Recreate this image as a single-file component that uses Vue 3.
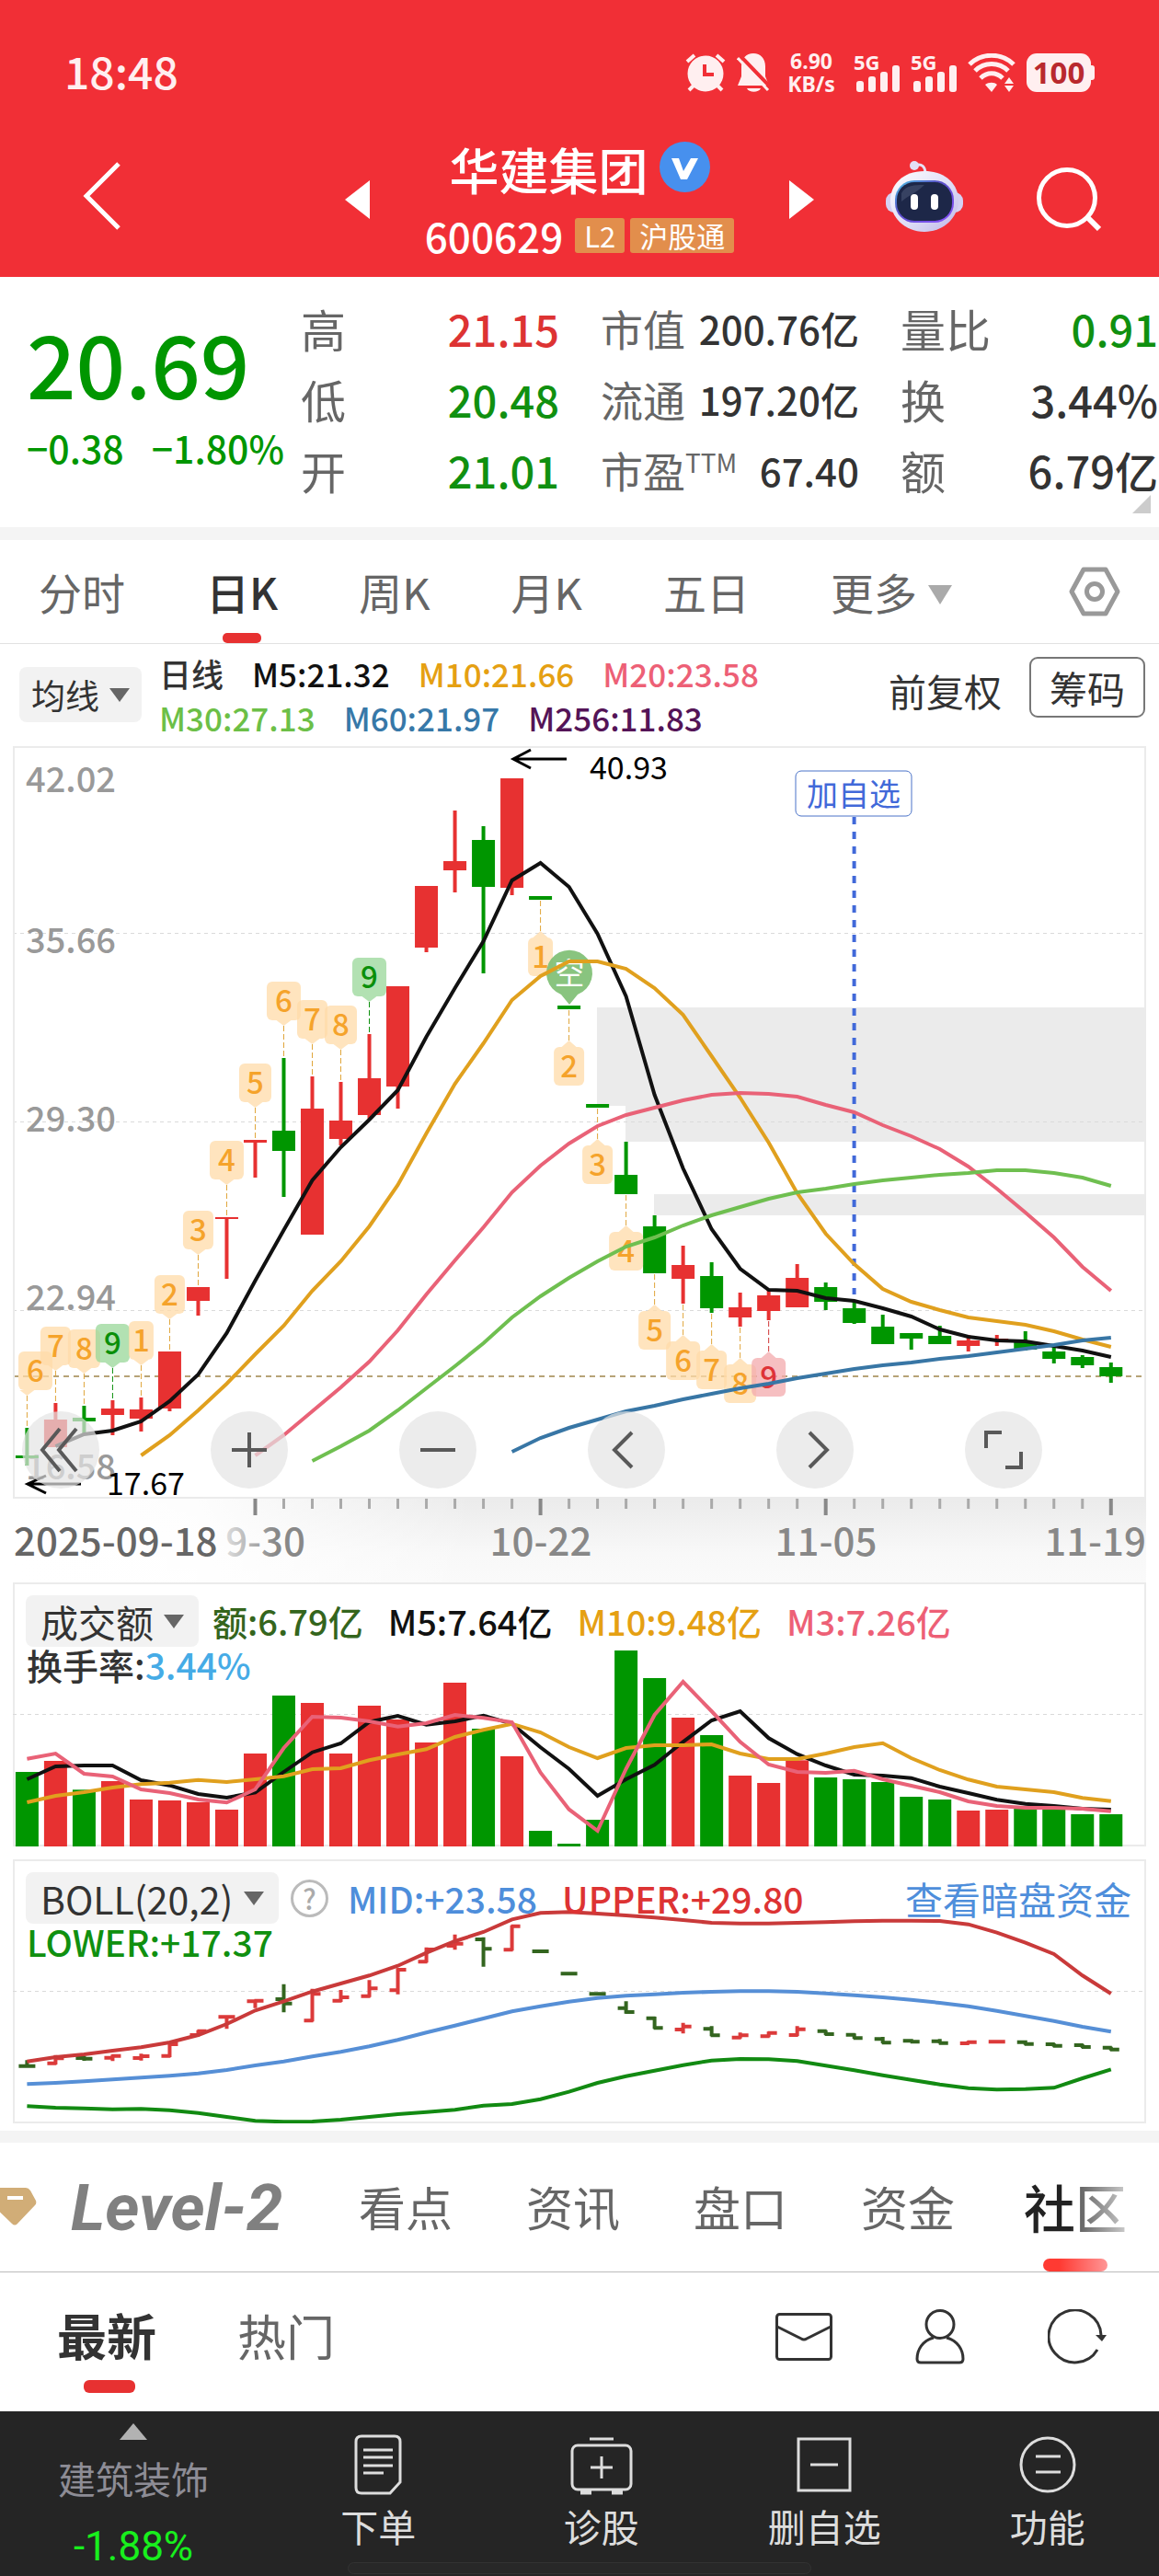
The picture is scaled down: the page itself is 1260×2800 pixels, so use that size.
<script setup>
import { ref } from 'vue'

const RED = '#e73131'
const GREEN = '#009600'
const STEP = 31.01
const FIRST_X = 29.4
const TAG_WIDTH = { 1: 27, 2: 33, 3: 33, 4: 37, 5: 35, 6: 37, 7: 33, 8: 35, 9: 37 }

const period = ref('日K')
const section = ref('社区')
const feed = ref('最新')

const xAt = i => FIRST_X + STEP * i

// legend values
const averages = [
  [
    { text: '日线', tone: 'ink' },
    { text: 'M5:21.32', tone: 'black' },
    { text: 'M10:21.66', tone: 'amber' },
    { text: 'M20:23.58', tone: 'pink' }
  ],
  [
    { text: 'M30:27.13', tone: 'lime' },
    { text: 'M60:21.97', tone: 'steel' },
    { text: 'M256:11.83', tone: 'plum' }
  ]
]

const quotes = [
  [
    { label: '高', value: '21.15', tone: 'up' },
    { label: '低', value: '20.48', tone: 'down' },
    { label: '开', value: '21.01', tone: 'down' }
  ],
  [
    { label: '市值', value: '200.76亿' },
    { label: '流通', value: '197.20亿' },
    { label: '市盈', sup: 'TTM', value: '67.40' }
  ],
  [
    { label: '量比', value: '0.91', tone: 'down' },
    { label: '换', value: '3.44%' },
    { label: '额', value: '6.79亿' }
  ]
]

// [high, body top, body bottom, low, rising]
const candles = [
  [1552, 1582, 1585, 1593, 0], [1525, 1543, 1573, 1573, 1], [1528, 1541, 1545, 1559, 0],
  [1522, 1531, 1538, 1560, 1], [1519, 1532, 1542, 1556, 1], [1469, 1469, 1531, 1534, 1],
  [1399, 1399, 1414, 1430, 1], [1323, 1323, 1325, 1390, 1], [1239, 1239, 1242, 1280, 1],
  [1150, 1229, 1251, 1301, 0], [1170, 1205, 1342, 1342, 1], [1176, 1218, 1238, 1245, 1],
  [1124, 1172, 1212, 1216, 1], [1072, 1072, 1181, 1205, 1], [963, 963, 1030, 1035, 1],
  [881, 936, 946, 970, 1], [898, 913, 964, 1058, 0], [846, 846, 965, 973, 1],
  [974, 974, 978, 978, 0], [1093, 1093, 1097, 1097, 0], [1200, 1200, 1204, 1204, 0],
  [1241, 1277, 1298, 1298, 0], [1321, 1333, 1384, 1384, 0], [1354, 1375, 1390, 1417, 1],
  [1372, 1387, 1422, 1427, 0], [1405, 1421, 1432, 1442, 1], [1402, 1408, 1425, 1435, 1],
  [1374, 1389, 1421, 1421, 1], [1394, 1399, 1415, 1424, 0], [1415, 1422, 1438, 1439, 0],
  [1429, 1442, 1461, 1461, 0], [1449, 1449, 1455, 1467, 0], [1441, 1452, 1461, 1461, 0],
  [1451, 1457, 1463, 1469, 1], [1451, 1455, 1457, 1463, 1], [1447, 1458, 1467, 1468, 0],
  [1464, 1469, 1477, 1482, 0], [1473, 1475, 1484, 1487, 0], [1481, 1486, 1496, 1503, 0]
]

const line = (values, start = 0, scale = 1, shift = 0) =>
  values.map((v, i) => `${xAt(i + start).toFixed(1)},${(v * scale + shift).toFixed(1)}`).join(' ')

const priceLines = [
  { color: '#111', points: line([1572, 1559, 1555, 1545, 1523, 1494, 1449, 1392, 1337, 1283, 1247, 1217, 1185, 1127, 1074, 1023, 957, 938, 964, 1015, 1083, 1190, 1270, 1336, 1379, 1402, 1403, 1411, 1414, 1422, 1431, 1445, 1453, 1457, 1458, 1463, 1468, 1475], 1) },
  { color: '#e0a01e', points: line([1582, 1560, 1533, 1504, 1472, 1441, 1403, 1371, 1333, 1288, 1232, 1178, 1134, 1087, 1061, 1045, 1045, 1053, 1074, 1103, 1148, 1193, 1242, 1297, 1341, 1374, 1401, 1415, 1424, 1432, 1436, 1440, 1447, 1456, 1464], 4) },
  { color: '#e96277', points: line([1582, 1560, 1534, 1508, 1480, 1446, 1407, 1370, 1334, 1296, 1267, 1243, 1224, 1212, 1204, 1196, 1190, 1188, 1189, 1192, 1201, 1209, 1223, 1235, 1249, 1268, 1292, 1318, 1345, 1377, 1403], 8) },
  { color: '#6fbf50', points: line([1588, 1572, 1555, 1533, 1509, 1485, 1460, 1432, 1409, 1389, 1371, 1355, 1345, 1332, 1321, 1312, 1303, 1296, 1292, 1287, 1283, 1280, 1277, 1275, 1272, 1272, 1275, 1280, 1289], 10) },
  { color: '#3876a5', points: line([1578, 1563, 1552, 1543, 1534, 1528, 1521, 1515, 1509, 1504, 1498, 1493, 1488, 1484, 1481, 1477, 1474, 1470, 1466, 1462, 1457, 1454], 17) }
]

const tags = [
  [0, 6], [1, 7], [2, 8], [3, 9, 'green'], [4, 1], [5, 2], [6, 3], [7, 4], [8, 5], [9, 6], [10, 7], [11, 8], [12, 9, 'green'],
  [18, 1], [19, 2], [20, 3], [21, 4], [22, 5], [23, 6], [24, 7], [25, 8], [26, 9, 'red']
].map(([i, n, kind = 'orange']) => {
  const above = i < 13
  const x = xAt(i)
  const width = TAG_WIDTH[n]
  const anchor = above ? candles[i][0] : candles[i][3]
  const top = above ? anchor - 83 : anchor + 41
  const left = Math.max(20, x - width / 2)
  const tip = above ? top + 48 : top - 7
  const edge = above ? top + 42 : top
  return { i, n, kind, x, left, width, top, anchor, tip, pointer: `${x - 8},${edge} ${x + 8},${edge} ${x},${tip}` }
})

const priceScale = [
  { text: '42.02', y: 861 },
  { text: '35.66', y: 1036 },
  { text: '29.30', y: 1230 },
  { text: '22.94', y: 1424 },
  { text: '16.58', y: 1608 }
]

const ticks = Array.from({ length: 31 }, (_, k) => k + 8)

const PANEL = 1 / 3

// [bar top, rising]
const volumes = [
  [678, 0], [642, 1], [736, 0], [708, 1], [768, 1], [771, 1], [777, 1], [801, 1], [618, 1], [429, 0],
  [453, 1], [618, 1], [462, 1], [507, 1], [582, 1], [387, 1], [537, 0], [627, 1], [870, 0], [912, 0],
  [834, 0], [282, 0], [372, 0], [501, 1], [558, 0], [690, 1], [714, 1], [640, 1], [696, 0], [702, 0],
  [711, 0], [759, 0], [768, 0], [804, 1], [801, 1], [798, 0], [798, 0], [816, 0], [816, 0]
]
const volumeY = v => v * PANEL - 20
const volumeLines = [
  { color: '#111', points: line([702, 660, 657, 657, 705, 722, 750, 762, 745, 678, 614, 585, 515, 495, 524, 513, 494, 521, 598, 668, 756, 702, 655, 580, 510, 480, 568, 620, 657, 687, 690, 698, 726, 747, 769, 782, 789, 798, 801], 0, PANEL, -20) },
  { color: '#e0a01e', points: line([777, 756, 744, 729, 718, 713, 704, 711, 702, 692, 669, 666, 640, 621, 604, 564, 541, 521, 549, 597, 633, 600, 591, 591, 588, 618, 636, 636, 618, 597, 584, 633, 672, 703, 726, 735, 744, 763, 773], 0, PANEL, -20) },
  { color: '#e96277', points: line([635, 618, 684, 693, 735, 747, 768, 778, 735, 600, 498, 501, 513, 530, 519, 492, 502, 516, 680, 800, 870, 668, 492, 384, 480, 580, 654, 678, 681, 674, 702, 723, 744, 774, 789, 795, 795, 798, 806], 0, PANEL, -20) }
]

// [open, close, high, low, rising]
const bars = [
  [707, 707, 688, 712, 0], [698, 682, 671, 702, 1], [681, 683, 674, 690, 0], [680, 674, 670, 691, 1],
  [681, 675, 667, 689, 1], [674, 636, 630, 678, 1], [606, 593, 590, 610, 1], [547, 547, 543, 586, 1],
  [496, 494, 490, 518, 1], [489, 503, 440, 532, 0], [559, 472, 455, 562, 1], [494, 483, 459, 498, 1],
  [479, 454, 427, 482, 1], [460, 393, 388, 473, 1], [367, 327, 320, 370, 1], [315, 308, 278, 328, 1],
  [294, 325, 287, 383, 0], [328, 251, 248, 331, 1], [333, 333, 329, 337, 0], [406, 406, 402, 410, 0],
  [472, 472, 468, 476, 0], [518, 531, 496, 536, 0], [551, 583, 546, 586, 0], [588, 578, 566, 601, 1],
  [586, 607, 577, 610, 0], [614, 607, 598, 617, 1], [610, 599, 595, 613, 1], [606, 587, 577, 609, 1],
  [593, 603, 590, 606, 0], [605, 616, 601, 618, 0], [619, 631, 612, 633, 0], [625, 628, 619, 631, 0],
  [626, 632, 619, 634, 0], [633, 629, 625, 635, 1], [628, 628, 625, 632, 1], [629, 635, 623, 638, 0],
  [636, 641, 633, 644, 0], [639, 645, 636, 648, 0], [647, 653, 644, 656, 0]
]
const bollY = v => v * PANEL - 11
const barPath = ([open, close, high, low], i) => {
  const x = xAt(i)
  return `M${x} ${bollY(high)}V${bollY(low)}M${x - 9} ${bollY(open)}H${x + 1}M${x - 1} ${bollY(close)}H${x + 9}`
}
const bollLines = [
  { color: '#c93a3a', points: line([692, 678, 669, 657, 646, 630, 606, 570, 526, 496, 464, 438, 412, 380, 338, 300, 270, 229, 208, 205, 210, 216, 223, 231, 240, 242, 242, 240, 238, 235, 233, 233, 234, 245, 272, 305, 342, 412, 471], 0, PANEL, -11) },
  { color: '#568fd6', points: line([766, 762, 757, 751, 745, 739, 731, 720, 705, 692, 676, 661, 643, 622, 598, 575, 552, 529, 512, 497, 485, 478, 473, 468, 465, 463, 463, 465, 470, 476, 483, 491, 501, 512, 527, 544, 560, 579, 595], 0, PANEL, -11) },
  { color: '#128a12', points: line([838, 843, 845, 848, 847, 851, 860, 873, 886, 889, 888, 882, 873, 864, 857, 850, 836, 831, 815, 791, 762, 740, 722, 704, 689, 684, 685, 691, 706, 721, 737, 752, 767, 779, 784, 782, 778, 747, 718], 0, PANEL, -11) }
]

const tools = [
  { label: '最早', d: 'M41 19 22 42 41 65M59 19 40 42 59 65' },
  { label: '放大', d: 'M42 23V61M23 42H61' },
  { label: '缩小', d: 'M23 42H61' },
  { label: '左移', d: 'M48 23 29 42 48 61' },
  { label: '右移', d: 'M36 23 55 42 36 61' },
  { label: '全屏', d: 'M23 40V23H40M44 61H61V44' }
]
</script>

<template>
  <div class="page">
    <header class="top">
      <div class="status">
        <span class="clock">18:48</span>
        <div class="status-icons">
          <svg width="44" height="42" viewBox="0 0 44 42">
            <circle cx="22" cy="22" r="19.5" fill="#ffeff0" />
            <path d="M2 9 10 2M42 9 34 2M4 40 10 34M40 40 34 34" stroke="#ffeff0" stroke-width="4" />
            <path d="M21 12V23H31" stroke="#f12f36" stroke-width="4" fill="none" />
          </svg>
          <svg width="37" height="42" viewBox="0 0 37 42">
            <path d="M18 0C26 0 31 6 31 14V25L35 35H1L5 25V14C5 6 10 0 18 0ZM11 38H26C24 43 13 43 11 38Z" fill="#ffeff0" />
            <path d="M4 3 37 37" stroke="#f12f36" stroke-width="4" />
            <path d="M1 5 34 40" stroke="#ffeff0" stroke-width="3" />
          </svg>
          <span class="speed">6.90<br>KB/s</span>
          <div v-for="sim in 2" :key="sim" class="signal">
            <span>5G</span>
            <svg width="50" height="42" viewBox="0 0 50 42">
              <g fill="#ffeff0">
                <rect x="3" y="30" width="8" height="12" rx="3" />
                <rect x="16" y="25" width="8" height="17" rx="3" />
                <rect x="29" y="20" width="8" height="22" rx="3" />
                <rect x="42" y="13" width="8" height="29" rx="3" />
              </g>
            </svg>
          </div>
          <svg width="52" height="42" viewBox="0 0 52 42" fill="none" stroke="#ffeff0" stroke-width="5">
            <path d="M2 12C15-1 37-1 50 12M8 19C18 9 34 9 44 19M14 27C21 20 31 20 38 27" />
            <path d="M19 34C23 31 29 31 32 34L26 42Z M40 33 45 26 50 33ZM40 35 45 42 50 35Z" fill="#ffeff0" stroke="none" />
          </svg>
          <span class="battery">100</span>
        </div>
      </div>
      <nav class="nav">
        <button class="back" aria-label="返回">
          <svg width="42" height="74" viewBox="0 0 42 74"><path d="M39 2 4 37 39 72" fill="none" stroke="#fff" stroke-width="5" /></svg>
        </button>
        <div class="stepper">
          <button aria-label="上一只"><svg width="27" height="42" viewBox="0 0 27 42"><path d="M27 0V42L0 21Z" fill="#fff" /></svg></button>
          <div class="stock">
            <h1>华建集团
              <svg width="55" height="55" viewBox="0 0 55 55"><circle cx="27.500" cy="27.500" r="27.500" fill="#4790ee" /><path d="M13 18H21L26 32 34 18H42L30 41H23Z" fill="#fff" /></svg>
            </h1>
            <div class="code">600629<span class="badge">L2</span><span class="badge wide">沪股通</span></div>
          </div>
          <button aria-label="下一只"><svg width="27" height="42" viewBox="0 0 27 42"><path d="M0 0V42L27 21Z" fill="#fff" /></svg></button>
        </div>
        <div class="nav-actions">
          <button aria-label="智能助手">
            <svg width="84" height="78" viewBox="0 0 84 78">
              <defs>
                <linearGradient id="shell" x1="0" y1="0" x2="1" y2="1"><stop offset="0" stop-color="#fff" /><stop offset=".6" stop-color="#dcdaf5" /><stop offset="1" stop-color="#bdb5e8" /></linearGradient>
                <linearGradient id="visor" x1="0" y1="0" x2="1" y2="1"><stop offset="0" stop-color="#4cc8e8" /><stop offset=".4" stop-color="#5a50c8" /><stop offset="1" stop-color="#8a50ff" /></linearGradient>
              </defs>
              <path d="M31 5C39 2 43 6 43 14" fill="none" stroke="#e6e2f7" stroke-width="3" />
              <circle cx="31" cy="5" r="5" fill="#e3e0f5" />
              <rect x="0" y="34" width="84" height="22" rx="9" fill="#d5d1f3" />
              <path d="M42 11C66 11 79 26 79 43S64 77 42 77 5 60 5 43 18 11 42 11Z" fill="url(#shell)" />
              <rect x="10" y="21" width="64" height="46" rx="21" fill="url(#visor)" />
              <rect x="12" y="23" width="60" height="42" rx="19" fill="#1d2748" />
              <path d="M17 35C22 26 31 26 42 26 31 36 24 38 17 44Z" fill="#4a5575" opacity=".6" />
              <rect x="27" y="36" width="8" height="17" rx="4" fill="#fff" />
              <rect x="49" y="36" width="8" height="17" rx="4" fill="#fff" />
            </svg>
          </button>
          <button aria-label="搜索">
            <svg width="70" height="70" viewBox="0 0 70 70" fill="none" stroke="#fff" stroke-width="5"><circle cx="33" cy="33" r="30.500" /><path d="M56 55 68 67" stroke-width="6" /></svg>
          </button>
        </div>
      </nav>
    </header>

    <section class="quote">
      <div class="price">
        <strong>20.69</strong>
        <div class="change"><span>−0.38</span><span>−1.80%</span></div>
      </div>
      <dl v-for="(col, c) in quotes" :key="c" :class="`col-${c}`">
        <div v-for="row in col" :key="row.label">
          <dt>{{ row.label }}<sup v-if="row.sup">{{ row.sup }}</sup></dt>
          <dd :class="row.tone">{{ row.value }}</dd>
        </div>
      </dl>
      <i class="corner"></i>
    </section>

    <nav class="periods">
      <button
        v-for="name in ['分时', '日K', '周K', '月K', '五日', '更多']"
        :key="name"
        :class="{ active: period === name }"
        @click="period = name"
      >
        {{ name }}<i v-if="name === '更多'" class="caret light"></i>
      </button>
      <button class="settings" aria-label="设置">
        <svg width="56" height="54" viewBox="0 0 56 54" fill="none" stroke="#999" stroke-width="5"><path d="M16 3H40L53 27 40 51H16L3 27Z" stroke-linejoin="round" /><circle cx="28" cy="27" r="8.500" /></svg>
      </button>
    </nav>

    <section class="averages">
      <label class="pick">
        <select aria-label="指标"><option>均线</option></select>
        <i class="caret"></i>
      </label>
      <div class="average-rows">
        <div v-for="(row, r) in averages" :key="r">
          <span v-for="item in row" :key="item.text" :class="item.tone">{{ item.text }}</span>
        </div>
      </div>
      <button class="plain">前复权</button>
      <button class="outlined">筹码</button>
    </section>

    <section class="chart">
      <svg viewBox="0 811 1260 909">
        <defs>
          <linearGradient id="axisDown" x1="0" y1="0" x2="0" y2="1"><stop offset="0" stop-color="#ebebeb" /><stop offset=".65" stop-color="#f8f8f8" /><stop offset="1" stop-color="#fafafa" /></linearGradient>
          <linearGradient id="axisFade"><stop offset="0" stop-color="#fff" /><stop offset=".4" stop-color="#fff" stop-opacity=".9" /><stop offset="1" stop-color="#fff" stop-opacity="0" /></linearGradient>
          <linearGradient id="dateFade" gradientUnits="userSpaceOnUse" x1="240" y1="0" x2="300" y2="0"><stop offset="0" stop-color="#888" stop-opacity="0.2" /><stop offset="1" stop-color="#888" /></linearGradient>
        </defs>
        <path d="M649 1095H1246V1241H680V1202H649ZM711 1298H1246V1321H711Z" fill="#ebebeb" />
        <path d="M14 1014.500H1246M14 1219.500H1246M14 1424.500H1246" stroke="#dadada" stroke-width="1" stroke-dasharray="4 4" />
        <path d="M14 1496H1246" stroke="#b7a377" stroke-width="2" stroke-dasharray="6 5" />
        <rect x="15" y="812" width="1230" height="816" fill="none" stroke="#ebebeb" stroke-width="2" />

        <text v-for="p in priceScale" :key="p.text" :y="p.y" x="28" class="scale">{{ p.text }}</text>

        <g v-for="(c, i) in candles" :key="i" :fill="c[4] ? RED : GREEN">
          <rect :x="xAt(i) - 2" :y="c[0]" width="4" :height="c[3] - c[0]" />
          <rect :x="xAt(i) - 12.5" :y="c[1]" width="25" :height="c[2] - c[1]" />
        </g>

        <g v-for="t in tags" :key="t.i" :class="['tag', t.kind]">
          <path :d="`M${t.x} ${t.tip}V${t.anchor}`" />
          <polygon :points="t.pointer" />
          <rect :x="t.left" :y="t.top" :width="t.width" height="42" rx="6" />
          <text :x="t.left + t.width / 2" :y="t.top + 33">{{ t.n }}</text>
        </g>

        <path d="M928.600 888V1407" stroke="#4169d9" stroke-width="4" stroke-dasharray="8 8" />
        <path d="M619 1092 610 1081A25 25 0 1 1 628 1081Z" fill="#7fbf74" fill-opacity=".92" />
        <text x="619" y="1070" class="pin">空</text>

        <polyline v-for="l in priceLines" :key="l.color" :points="l.points" :stroke="l.color" fill="none" stroke-width="4" />

        <rect x="865" y="838" width="126" height="49" rx="6" fill="#fff" stroke="#4a72c8" stroke-width="1" />
        <text x="928" y="876" class="watch">加自选</text>

        <g fill="none" stroke="#000" stroke-width="3">
          <path d="M616 825H558M577 815 558 825 577 835" />
          <path d="M88 1613H30M50 1604 30 1613 50 1623" />
        </g>
        <text x="641" y="847" class="extreme">40.93</text>
        <text x="116" y="1625" class="extreme">17.67</text>

        <rect x="14" y="1629" width="1232" height="91" fill="url(#axisDown)" />
        <rect x="14" y="1629" width="500" height="91" fill="url(#axisFade)" />
        <path v-for="i in ticks" :key="i" :d="`M${xAt(i)} 1629V${i % 10 === 8 ? 1647 : 1640}`" :stroke="i % 10 === 8 ? '#888' : '#aaa'" :stroke-width="i % 10 === 8 ? 4 : 3" />
        <g class="dates">
          <text x="15" y="1691" fill="#666">2025-09-18</text>
          <text x="332" y="1691" text-anchor="end" fill="url(#dateFade)">9-30</text>
          <text x="588" y="1691" text-anchor="middle">10-22</text>
          <text x="898" y="1691" text-anchor="middle">11-05</text>
          <text x="1246" y="1691" text-anchor="end">11-19</text>
        </g>
      </svg>
      <div class="tools">
        <button v-for="tool in tools" :key="tool.label" :aria-label="tool.label">
          <svg width="84" height="84" viewBox="0 0 84 84"><path :d="tool.d" fill="none" stroke="#595959" stroke-width="4" /></svg>
        </button>
      </div>
    </section>

    <section class="panel">
      <svg viewBox="0 0 1260 287">
        <rect x="15" y="1" width="1230" height="285" fill="none" stroke="#ebebeb" stroke-width="2" />
        <path d="M14 143.500H1246" stroke="#dadada" stroke-dasharray="4 4" />
        <rect v-for="(v, i) in volumes" :key="i" :x="xAt(i) - 12.5" :y="volumeY(v[0])" width="25" :height="287 - volumeY(v[0])" :fill="v[1] ? RED : GREEN" />
        <polyline v-for="l in volumeLines" :key="l.color" :points="l.points" :stroke="l.color" fill="none" stroke-width="4" />
      </svg>
      <div class="panel-legend">
        <div class="legend-row">
          <label class="pick">
            <select aria-label="副图指标"><option>成交额</option></select>
            <i class="caret"></i>
          </label>
          <span class="moss">额:6.79亿</span>
          <span class="black">M5:7.64亿</span>
          <span class="amber">M10:9.48亿</span>
          <span class="pink">M3:7.26亿</span>
        </div>
        <div class="second-row"><span class="ink">换手率:</span><span class="sky">3.44%</span></div>
      </div>
    </section>

    <section class="panel">
      <svg viewBox="0 0 1260 287">
        <rect x="15" y="1" width="1230" height="285" fill="none" stroke="#ebebeb" stroke-width="2" />
        <path d="M14 143.500H1246" stroke="#dadada" stroke-dasharray="4 4" />
        <path v-for="(b, i) in bars" :key="i" :d="barPath(b, i)" :stroke="b[4] ? '#dc3a3a' : '#33651f'" fill="none" stroke-width="4" />
        <polyline v-for="l in bollLines" :key="l.color" :points="l.points" :stroke="l.color" fill="none" stroke-width="4" />
      </svg>
      <div class="panel-legend">
        <div class="legend-row boll">
          <label class="pick">
            <select aria-label="副图指标"><option>BOLL(20,2)</option></select>
            <i class="caret"></i>
          </label>
          <button class="help" aria-label="说明">?</button>
          <span class="blue">MID:+23.58</span>
          <span class="up">UPPER:+29.80</span>
          <a href="#">查看暗盘资金</a>
        </div>
        <div class="second-row"><span class="down">LOWER:+17.37</span></div>
      </div>
    </section>

    <nav class="sections">
      <button class="level">
        <svg width="40" height="44" viewBox="0 0 40 44"><path d="M-8 4Q-7 1-4 1H28Q31 1 33 4L39 15Q40 18 38 20L19 40Q16 43 13 40L-8 20Z" fill="#d1ad77" /><rect x="8" y="10" width="17" height="4" fill="#fff" /></svg>
        <span>Level-2</span>
      </button>
      <button
        v-for="name in ['看点', '资讯', '盘口', '资金', '社区']"
        :key="name"
        class="section-tab"
        :class="{ active: section === name }"
        @click="section = name"
      >
        <span>{{ name }}</span>
      </button>
    </nav>

    <nav class="feeds">
      <button v-for="name in ['最新', '热门']" :key="name" :class="{ active: feed === name }" @click="feed = name">{{ name }}</button>
      <div class="feed-icons">
        <button aria-label="消息"><svg width="62" height="60" viewBox="0 0 62 60"><rect x="1.500" y="5.500" width="59" height="49" rx="3" /><path d="M2 19 28 32Q31 34 34 32L60 19" /></svg></button>
        <button aria-label="我的"><svg width="54" height="60" viewBox="0 0 54 60"><circle cx="27" cy="16.500" r="15" /><path d="M20 31C8 34 2 44 2 54Q2 58 6 58H48Q52 58 52 54C52 44 46 34 34 31" /></svg></button>
        <button aria-label="刷新"><svg width="64" height="60" viewBox="0 0 64 60"><path d="M54 44A28.500 28.500 0 1 1 58 28" /><path d="M52 28H64L59 35Z" fill="#333" stroke="none" /></svg></button>
      </div>
    </nav>

    <footer class="bottom">
      <button class="sector">
        <i></i>
        <span>建筑装饰</span>
        <b>-1.88%</b>
      </button>
      <button>
        <svg width="68" height="66" viewBox="0 0 68 66"><path d="M10 8Q10 2 16 2H52Q58 2 58 8V52L47 64H16Q10 64 10 58Z" /><path d="M18 17H50M18 25H50M18 34H50M18 42H40" /></svg>
        <span>下单</span>
      </button>
      <button>
        <svg width="68" height="66" viewBox="0 0 68 66"><path d="M21 5H47M34 24V48M22 36H46" /><rect x="2" y="12" width="64" height="48" rx="6" /><path d="M11 63H23M45 63H57" stroke-width="5" /></svg>
        <span>诊股</span>
      </button>
      <button>
        <svg width="68" height="66" viewBox="0 0 68 66"><rect x="6" y="5" width="56" height="56" /><path d="M19 33H49" /></svg>
        <span>删自选</span>
      </button>
      <button>
        <svg width="68" height="66" viewBox="0 0 68 66"><circle cx="34" cy="33" r="29" /><path d="M21 24H48M21 41H48" /></svg>
        <span>功能</span>
      </button>
      <i class="home-bar"></i>
    </footer>
  </div>
</template>

<style>
body {
  margin: 0;
  background: #fff;
}
</style>

<style scoped>
.page {
  font-family: "Noto Sans CJK SC", "Noto Sans", sans-serif;
  color: #333;
  background: #fff;
  overflow: hidden;
}

button,
select {
  font: inherit;
  color: inherit;
  background: none;
  border: none;
  padding: 0;
  margin: 0;
  white-space: nowrap;
  cursor: pointer;
}

svg {
  display: block;
}

.up { color: #dd3333; }
.down { color: #109010; }
.ink { color: #333; }
.black { color: #111; }
.amber { color: #e5a013; }
.pink { color: #ed6076; }
.lime { color: #6cbf47; }
.steel { color: #3778a8; }
.plum { color: #541457; }
.moss { color: #34651d; }
.sky { color: #45abe6; }
.blue { color: #4e8edb; }

.top {
  background: #f12f36;
  color: #fff;
}

.status {
  display: flex;
  align-items: center;
  justify-content: space-between;
  height: 158px;
  padding: 0 74px 0 70px;
  color: #ffeff0;
}

.clock {
  padding-bottom: 6px;
  font-size: 48px;
  font-weight: 500;
}

.status-icons {
  display: flex;
  align-items: center;
  gap: 12px;
}

.speed {
  width: 52px;
  margin: 0 8px 0 6px;
  font-family: "Noto Sans", sans-serif;
  font-size: 23px;
  font-weight: 700;
  line-height: 25px;
  text-align: center;
}

.signal {
  position: relative;
}

.signal span {
  position: absolute;
  top: 0;
  left: 0;
  font-family: "Noto Sans", sans-serif;
  font-size: 22px;
  font-weight: 700;
  line-height: 18px;
}

.battery {
  position: relative;
  width: 70px;
  height: 42px;
  border-radius: 11px;
  background: #ffeff0;
  color: #b9292e;
  font-family: "Noto Sans", sans-serif;
  font-size: 33px;
  font-weight: 700;
  line-height: 42px;
  text-align: center;
}

.battery::after {
  content: "";
  position: absolute;
  top: 13px;
  right: -4px;
  width: 4px;
  height: 16px;
  border-radius: 0 3px 3px 0;
  background: #ffeff0;
}

.nav {
  display: grid;
  grid-template-columns: 1fr 510px 1fr;
  height: 143px;
}

.back {
  align-self: start;
  justify-self: start;
  padding: 18px 0 0 90px;
}

.stepper {
  display: flex;
  justify-content: space-between;
  align-items: flex-start;
}

.stepper > button {
  padding-top: 38px;
}

.stock {
  display: flex;
  flex-direction: column;
  align-items: center;
}

h1 {
  display: flex;
  align-items: center;
  gap: 12px;
  margin: 0;
  font-size: 54px;
  font-weight: 500;
  line-height: 46px;
}

h1 svg {
  margin-top: -4px;
}

.code {
  display: flex;
  align-items: center;
  margin-top: 21px;
  font-size: 44px;
  font-weight: 500;
  line-height: 52px;
}

.badge {
  margin-left: 13px;
  padding: 0 10px;
  border-radius: 3px;
  background: #e28e4c;
  font-size: 31px;
  font-weight: 400;
  line-height: 38px;
}

.badge.wide {
  margin-left: 6px;
}

.nav-actions {
  display: flex;
  align-items: flex-start;
  justify-content: flex-end;
  gap: 80px;
  padding: 17px 63px 0 0;
}

.nav-actions button:last-child {
  padding-top: 7px;
}

.quote {
  position: relative;
  display: grid;
  grid-template-columns: minmax(0, 253fr) minmax(0, 281fr) minmax(0, 281fr) minmax(0, 280fr);
  column-gap: 45px;
  height: 272px;
  padding: 0 1px 0 29px;
  white-space: nowrap;
}

.price {
  color: #009600;
}

.price strong {
  display: block;
  margin-top: 42px;
  font-size: 94px;
  font-weight: 500;
  line-height: 100px;
}

.change {
  display: flex;
  gap: 30px;
  margin-top: 17px;
  font-size: 41px;
  font-weight: 500;
  line-height: 52px;
}

dl {
  margin: 17px 0 0;
}

dl > div {
  display: flex;
  justify-content: space-between;
  height: 77px;
  line-height: 77px;
}

dt {
  font-size: 49px;
  color: #666;
}

dd {
  margin: 0;
  font-size: 47px;
  font-weight: 500;
}

.col-1 dt {
  font-size: 46px;
}

.col-1 dd {
  font-size: 42px;
}

sup {
  font-size: 28px;
  line-height: 0;
}

.corner {
  position: absolute;
  right: 9px;
  bottom: 15px;
  border-left: 20px solid transparent;
  border-bottom: 20px solid #ccc;
}

.periods {
  display: flex;
  align-items: center;
  gap: 88px;
  height: 112px;
  padding: 0 42px;
  border-top: 14px solid #f4f4f4;
  border-bottom: 1px solid #e2e2e2;
  color: #666;
  font-size: 47px;
}

.periods button {
  position: relative;
  height: 112px;
  line-height: 112px;
}

.periods .active {
  color: #333;
  font-weight: 500;
}

.periods .active::after {
  content: "";
  position: absolute;
  left: calc(50% - 21px);
  bottom: 0;
  width: 42px;
  height: 11px;
  border-radius: 5px;
  background: #e73131;
}

.periods .settings {
  display: flex;
  align-items: center;
  margin-left: auto;
}

.caret {
  display: inline-block;
  flex: none;
  border: 11px solid transparent;
  border-top: 15px solid #666;
  border-bottom: 0;
  pointer-events: none;
}

.caret.light {
  margin-left: 12px;
  border-width: 21px 13px 0;
  border-top-color: #aaa;
  vertical-align: 6px;
}

.averages {
  display: flex;
  align-items: flex-start;
  height: 111px;
  padding: 0 15px 0 21px;
}

.pick {
  display: flex;
  align-items: center;
  gap: 11px;
  height: 56px;
  padding: 0 16px;
  border-radius: 8px;
  background: #f2f2f2;
}

.pick select {
  appearance: none;
  outline: none;
  line-height: 56px;
  height: 56px;
}

.averages .pick {
  height: 60px;
  margin: 25px 19px 0 0;
  padding: 0 13px;
  font-size: 37px;
}

.average-rows {
  flex: 1;
  margin-top: 8px;
  font-size: 35px;
  font-weight: 500;
  line-height: 48px;
  white-space: nowrap;
}

.average-rows div {
  display: flex;
  gap: 31px;
}

.plain {
  margin: 22px 30px 0 0;
  font-size: 41px;
  line-height: 56px;
}

.outlined {
  height: 66px;
  margin-top: 14px;
  padding: 0 20px;
  border: 2px solid #777;
  border-radius: 9px;
  font-size: 41px;
  line-height: 60px;
}

.chart {
  position: relative;
}

.scale {
  font-size: 38px;
  font-weight: 500;
  fill: #999;
}

.tag text {
  font-size: 33px;
  font-weight: 500;
  text-anchor: middle;
}

.tag path {
  stroke-width: 1;
  stroke-dasharray: 6 3;
}

.tag rect,
.tag polygon {
  fill-opacity: 0.75;
}

.orange path { stroke: #e0a53a; }
.orange rect, .orange polygon { fill: #ffdba8; }
.orange text { fill: #f5a32b; }
.green path { stroke: #0a8f0a; }
.green rect, .green polygon { fill: #98d798; }
.green text { fill: #0a8f0a; }
.red path { stroke: #d03434; }
.red rect, .red polygon { fill: #f3a9ac; }
.red text { fill: #de3338; }

.pin {
  font-size: 33px;
  fill: #fff;
  text-anchor: middle;
}

.watch {
  font-size: 34px;
  fill: #4169d9;
  text-anchor: middle;
}

.extreme {
  font-size: 34px;
}

.dates {
  font-size: 42px;
  font-weight: 500;
  fill: #888;
}

.tools {
  position: absolute;
  top: 79.5%;
  left: 24px;
  right: 127px;
  display: flex;
  justify-content: space-between;
}

.tools button {
  width: 84px;
  height: 84px;
  border-radius: 50%;
  background: rgba(228, 228, 228, 0.7);
}

.panel {
  position: relative;
  margin-bottom: 14px;
}

.panel + .panel {
  margin-bottom: 8px;
}

.panel-legend {
  position: absolute;
  top: 14px;
  left: 28px;
  right: 30px;
  font-size: 38px;
  font-weight: 500;
  white-space: nowrap;
}

.legend-row {
  display: flex;
  align-items: center;
  gap: 27px;
  line-height: 56px;
}

.legend-row .pick {
  margin-right: -12px;
  font-size: 41px;
  font-weight: 400;
}

.boll .pick {
  margin-right: -14px;
}

.boll span {
  font-size: 39px;
}

.help {
  width: 41px;
  height: 41px;
  margin-right: -6px;
  border: 3px solid #bbb;
  border-radius: 50%;
  color: #aaa;
  font-size: 30px;
  line-height: 34px;
}

.legend-row a {
  margin-left: auto;
  color: #4e8edb;
  font-size: 41px;
  font-weight: 400;
  text-decoration: none;
}

.second-row {
  margin-left: 1px;
  font-size: 39px;
  line-height: 38px;
}

.sections {
  display: flex;
  height: 140px;
  border-top: 13px solid #f4f4f4;
  border-bottom: 1px solid #bbb;
}

.level {
  display: flex;
  align-items: center;
  width: 350px;
  color: #808080;
}

.level span {
  margin-left: 37px;
  font-family: Roboto, sans-serif;
  font-size: 71px;
  font-style: italic;
  font-weight: 700;
}

.section-tab {
  position: relative;
  width: 182px;
  padding-bottom: 3px;
  color: #666;
  font-size: 51px;
}

.section-tab.active {
  font-size: 56px;
  font-weight: 500;
}

.section-tab.active span {
  background: linear-gradient(90deg, #222 45%, #666 55%, #ccc);
  background-clip: text;
  color: transparent;
}

.section-tab.active::after {
  content: "";
  position: absolute;
  left: calc(50% - 35px);
  bottom: 0;
  width: 70px;
  height: 14px;
  border-radius: 7px;
  background: linear-gradient(90deg, #ff3a32 25%, #ff9696);
}

.feeds {
  display: flex;
  align-items: flex-start;
  gap: 88px;
  height: 151px;
  padding: 0 57px 0 62px;
  font-size: 53px;
}

.feeds > button {
  position: relative;
  height: 131px;
  line-height: 136px;
  color: #666;
}

.feeds > .active {
  color: #333;
  font-size: 54px;
  font-weight: 700;
}

.feeds > .active::after {
  content: "";
  position: absolute;
  left: calc(50% - 25px);
  bottom: 0;
  width: 56px;
  height: 14px;
  border-radius: 6px;
  background: #e73131;
}

.feed-icons {
  display: flex;
  gap: 90px;
  margin: 40px 0 0 auto;
}

.feed-icons svg {
  fill: none;
  stroke: #333;
  stroke-width: 3;
}

.bottom {
  position: relative;
  display: grid;
  grid-template-columns: 290px repeat(4, 1fr);
  height: 179px;
  background: #252525;
  color: #ddd;
  font-size: 41px;
}

.bottom button {
  display: flex;
  flex-direction: column;
  align-items: center;
  padding-top: 25px;
}

.bottom svg {
  fill: none;
  stroke: #ddd;
  stroke-width: 3;
}

.bottom span {
  margin-top: 8px;
  line-height: 50px;
}

.bottom .sector {
  padding-top: 13px;
}

.sector i {
  border: 15px solid transparent;
  border-bottom: 18px solid #b2b2b2;
  border-top: 0;
}

.bottom .sector span {
  margin-top: 16px;
  color: #8d8c95;
}

.sector b {
  margin-top: 24px;
  color: #18ef1d;
  font-family: Roboto, sans-serif;
  font-size: 44px;
  font-weight: 400;
  line-height: 52px;
}

.home-bar {
  position: absolute;
  left: 30%;
  right: 30%;
  bottom: 2px;
  height: 11px;
  border: 1px solid #333;
  border-radius: 7px;
  background: #282828;
}
</style>
